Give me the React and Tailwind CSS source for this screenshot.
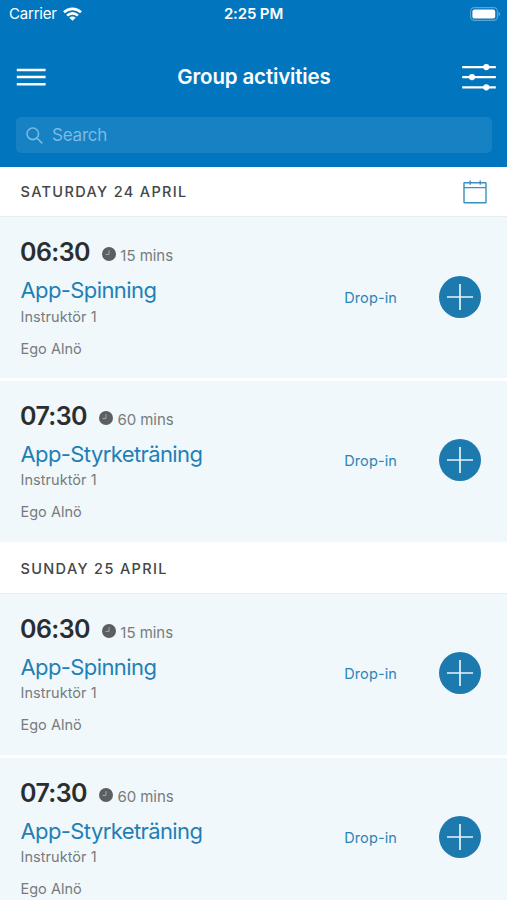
const days = [
  {
    label: 'Saturday 24 April',
    showCalendar: true,
    activities: [
      { time: '06:30', duration: '15 mins', name: 'App-Spinning', instructor: 'Instruktör 1', place: 'Ego Alnö' },
      { time: '07:30', duration: '60 mins', name: 'App-Styrketräning', instructor: 'Instruktör 1', place: 'Ego Alnö' },
    ],
  },
  {
    label: 'Sunday 25 April',
    showCalendar: false,
    activities: [
      { time: '06:30', duration: '15 mins', name: 'App-Spinning', instructor: 'Instruktör 1', place: 'Ego Alnö' },
      { time: '07:30', duration: '60 mins', name: 'App-Styrketräning', instructor: 'Instruktör 1', place: 'Ego Alnö' },
    ],
  },
];

function WifiIcon() {
  return (
    <svg width="19" height="14" viewBox="0 0 19 14" fill="none" stroke="white" strokeWidth="2.7">
      <path d="M1 5.2a12.3 12.3 0 0 1 17 0" />
      <path d="M4.1 8.6a7.8 7.8 0 0 1 10.8 0" />
      <path d="M9.5 13.8 6.3 10.8a4.5 4.5 0 0 1 6.4 0z" fill="white" stroke="none" />
    </svg>
  );
}

function BatteryIcon() {
  return (
    <svg width="31" height="14" viewBox="0 0 31 14" fill="none">
      <rect x="0.6" y="0.6" width="26.8" height="12.8" rx="3.8" stroke="white" strokeOpacity="0.35" strokeWidth="1.1" />
      <rect x="2.4" y="2.4" width="22.8" height="9.2" rx="2.2" fill="white" />
      <path d="M28.6 4.8c1.8.7 1.8 3.7 0 4.4z" fill="white" fillOpacity="0.45" />
    </svg>
  );
}

function MenuIcon() {
  return (
    <svg width="30" height="18" viewBox="0 0 30 18" fill="none" stroke="white" strokeWidth="2.5">
      <path d="M.8 2h28.8M.8 9.1h28.8M.8 16.2h28.8" />
    </svg>
  );
}

function FilterIcon() {
  return (
    <svg width="34" height="28" viewBox="0 0 34 28" fill="white" stroke="white" strokeWidth="2.3">
      <path d="M.2 4.1h33.6M.2 14.1h33.6M.2 24.3h33.6" />
      <circle cx="24.3" cy="4.1" r="3.1" stroke="none" />
      <circle cx="10" cy="14.1" r="3.1" stroke="none" />
      <circle cx="24.3" cy="24.3" r="3.1" stroke="none" />
    </svg>
  );
}

function SearchIcon() {
  return (
    <svg width="17" height="17" viewBox="0 0 17 17" fill="none" stroke="#7cbae1" strokeWidth="1.6">
      <circle cx="6.8" cy="6.8" r="5.8" />
      <path d="m10.9 11 5.3 5.4" />
    </svg>
  );
}

function CalendarIcon() {
  return (
    <svg width="24" height="24" viewBox="0 0 24 24" fill="none" stroke="#3a8fc1" strokeWidth="1.4">
      <rect x="1" y="2.7" width="22" height="20" rx="0.5" />
      <path d="M.8 7.6H23M7.2.6v4.2M17.2.6v4.2" />
    </svg>
  );
}

function ClockIcon() {
  return (
    <svg width="14" height="14" viewBox="0 0 14 14" fill="none">
      <circle cx="7" cy="7" r="7" fill="#5b5f61" />
      <path d="M7 3.2v4.2H3.6" stroke="#a5abad" strokeWidth="1" />
    </svg>
  );
}

function AddButton() {
  return (
    <button className="mb-[2px] shrink-0" aria-label="Add">
      <svg width="42" height="42" viewBox="0 0 42 42" fill="none">
        <circle cx="21" cy="21" r="21" fill="#1c7aaf" />
        <path d="M21 8v26M8 21h26" stroke="#e6f5fb" strokeWidth="1.7" />
      </svg>
    </button>
  );
}

function ActivityRow({ activity }) {
  return (
    <div className="flex h-[161px] items-center bg-[#f0f8fb] pr-[26px] pl-[21px]">
      <div className="flex h-full flex-1 flex-col items-start pt-[19px] text-[#777b7d]">
        <div className="flex h-[34px] items-center">
          <span className="-ml-px text-[25px] font-semibold tracking-[-0.6px] text-[#2b2e30]">{activity.time}</span>
          <span className="mt-[2px] mr-[4px] ml-[12.5px]">
            <ClockIcon />
          </span>
          <span className="mt-[6.5px] text-[15px] tracking-[-0.05px]">{activity.duration}</span>
        </div>
        <h3 className="mt-[4px] -ml-[0.5px] text-[22px] leading-[32px] tracking-[-0.6px] text-[#1f7fb6]">{activity.name}</h3>
        <p className="mt-[0.5px] -ml-[0.5px] text-[14.5px] leading-[20px] tracking-[0.05px]">{activity.instructor}</p>
        <p className="mt-[12px] -ml-[0.5px] text-[14.5px] leading-[20px]">{activity.place}</p>
      </div>
      <span className="mr-[42px] text-[14.5px] tracking-[0.12px] text-[#2d84b6]">Drop-in</span>
      <AddButton />
    </div>
  );
}

function DaySection({ day }) {
  return (
    <section className="bg-white">
      <div className="flex h-[52px] items-center justify-between border-b border-[#e8eef0] pt-[3px] pr-[20px] pl-[21px]">
        <h2 className="-ml-[0.5px] text-[14.5px] font-medium tracking-[1.35px] text-[#444748] uppercase">{day.label}</h2>
        {day.showCalendar && <CalendarIcon />}
      </div>
      <div className="flex flex-col gap-[2.75px]">
        {day.activities.map(activity => (
          <ActivityRow key={activity.time} activity={activity} />
        ))}
      </div>
    </section>
  );
}

export default function App() {
  return (
    <div className="h-[900px] w-[507px] overflow-hidden bg-white font-['Inter',sans-serif]">
      <header className="relative z-10 h-[167px] bg-[#0176bf] text-white">
        <div className="grid h-[28px] grid-cols-3 items-center pr-[6px] pl-[9px]">
          <div className="flex items-center gap-[6px]">
            <span className="text-[15px] tracking-[-0.2px]">Carrier</span>
            <WifiIcon />
          </div>
          <span className="-ml-[3px] text-center text-[15px] font-semibold tracking-[-0.15px]">2:25 PM</span>
          <div className="flex justify-end">
            <BatteryIcon />
          </div>
        </div>
        <div className="mt-[20px] flex h-[58px] items-center justify-between pr-[11px] pl-[16px]">
          <MenuIcon />
          <h1 className="text-[20.5px] font-semibold tracking-[-0.15px]">Group activities</h1>
          <FilterIcon />
        </div>
        <div className="mr-[15px] ml-[16px] mt-[11px] flex h-[36px] items-center gap-[9px] rounded-[5px] bg-[#1681c3] pl-[10px]">
          <SearchIcon />
          <span className="mt-[2px] text-[17px] tracking-[-0.2px] text-[#7cbae1]">Search</span>
        </div>
      </header>
      <main className="-mt-[2px]">
        {days.map(day => (
          <DaySection key={day.label} day={day} />
        ))}
      </main>
    </div>
  );
}
